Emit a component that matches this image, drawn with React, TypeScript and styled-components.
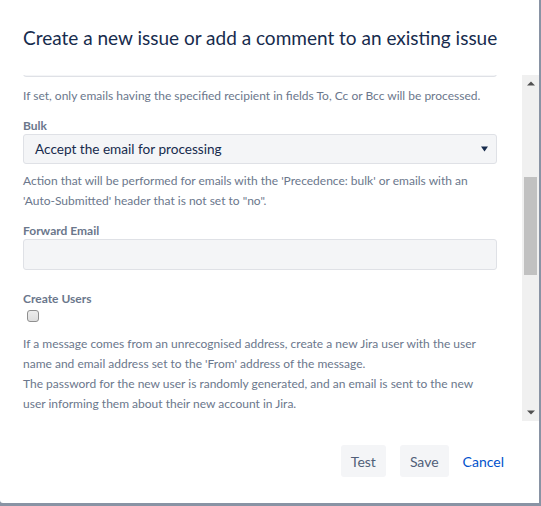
import React, { useLayoutEffect, useRef } from "react";
import styled, { createGlobalStyle } from "styled-components";

const GlobalStyle = createGlobalStyle`
  html, body { margin: 0; padding: 0; }
  body {
    background: #8993a4;
    font-family: Lato, "Noto Sans", "Liberation Sans", sans-serif;
  }
`;

const Dialog = styled.div`
  width: 539px;
  height: 503px;
  background: #ffffff;
  border-bottom-left-radius: 3px;
  display: flex;
  flex-direction: column;
  overflow: hidden;
`;

const Header = styled.div`
  height: 75px;
  padding: 0 23px;
  display: flex;
  align-items: center;
  box-sizing: border-box;
`;

const Title = styled.h2`
  margin: 0;
  font-size: 19px;
  font-weight: 400;
  color: #172b4d;
  white-space: nowrap;
`;

const Body = styled.div`
  height: 346px;
  display: flex;
  flex-direction: row;
`;

const Viewport = styled.div`
  flex: 1;
  overflow: hidden;
`;

const Content = styled.div`
  padding: 0 25px 40px 23px;
`;

const FieldGroup = styled.div<{ $gap?: number }>`
  margin-top: ${(p) => p.$gap ?? 0}px;
`;

const Label = styled.label`
  display: block;
  font-size: 12px;
  line-height: 16px;
  font-weight: 700;
  color: #6b778c;
`;

const TextInput = styled.div`
  height: 31px;
  box-sizing: border-box;
  background: #f4f5f7;
  border: 1px solid #dfe1e6;
  border-radius: 3px;
`;

const Select = styled.div`
  height: 30px;
  box-sizing: border-box;
  background: #f4f5f7;
  border: 1px solid #dfe1e6;
  border-radius: 3px;
  display: flex;
  align-items: center;
  justify-content: space-between;
  padding: 0 8px 0 11px;
  font-size: 13.6px;
  color: #172b4d;
`;

const Help = styled.div<{ $gap?: number }>`
  margin-top: ${(p) => p.$gap ?? 7}px;
  font-size: 12px;
  line-height: 20px;
  color: #6b778c;
  white-space: nowrap;
`;

const Checkbox = styled.input.attrs({ type: "checkbox" })`
  appearance: none;
  display: block;
  margin: 3px 0 0 4px;
  width: 12px;
  height: 12px;
  box-sizing: border-box;
  border: 1px solid #8f8f8f;
  border-radius: 3px;
  background: linear-gradient(#ededed, #dedede);
`;

const Scrollbar = styled.div`
  width: 17px;
  background: #f0f0f0;
  display: flex;
  flex-direction: column;
`;

const ScrollButton = styled.div`
  height: 17px;
  display: flex;
  align-items: center;
  justify-content: center;
`;

const Track = styled.div`
  flex: 1;
`;

const Thumb = styled.div<{ $top: number; $height: number }>`
  margin: ${(p) => p.$top}px 2px 0 2px;
  height: ${(p) => p.$height}px;
  background: #c1c1c1;
`;

const Footer = styled.div`
  flex: 1;
  display: flex;
  justify-content: flex-end;
  align-items: flex-start;
  padding: 24px 25px 0 0;
`;

const Button = styled.button<{ $link?: boolean; $gap?: number }>`
  height: 32px;
  padding: 0 10px;
  margin-left: ${(p) => p.$gap ?? 0}px;
  border: none;
  border-radius: 3px;
  background: ${(p) => (p.$link ? "transparent" : "#f4f5f7")};
  color: ${(p) => (p.$link ? "#0052cc" : "#505f79")};
  font-family: inherit;
  font-size: 14px;
  cursor: pointer;
`;

const Arrow = ({ dir }: { dir: "up" | "down" }) => (
  <svg width="8" height="5" viewBox="0 0 8 5">
    {dir === "up" ? (
      <polygon points="0,4.5 8,4.5 4,0.5" fill="#505050" />
    ) : (
      <polygon points="0,0.5 8,0.5 4,4.5" fill="#505050" />
    )}
  </svg>
);

export default function App() {
  const ref = useRef<HTMLDivElement>(null);
  useLayoutEffect(() => {
    if (ref.current) ref.current.scrollTop = 29;
  }, []);
  return (
    <>
      <GlobalStyle />
      <Dialog>
        <Header>
          <Title>Create a new issue or add a comment to an existing issue</Title>
        </Header>
        <Body>
          <Viewport ref={ref}>
            <Content>
              <FieldGroup>
                <TextInput />
                <Help $gap={9}>
                  If set, only emails having the specified recipient in fields To, Cc or Bcc will be processed.
                </Help>
              </FieldGroup>
              <FieldGroup $gap={12}>
                <Label>Bulk</Label>
                <Select>
                  <span>Accept the email for processing</span>
                  <svg width="7" height="6" viewBox="0 0 7 6">
                    <polygon points="0,0.5 7,0.5 3.5,5.5" fill="#172b4d" />
                  </svg>
                </Select>
                <Help>
                  Action that will be performed for emails with the 'Precedence: bulk' or emails with an
                  <br />
                  'Auto-Submitted' header that is not set to "no".
                </Help>
              </FieldGroup>
              <FieldGroup $gap={12}>
                <Label>Forward Email</Label>
                <TextInput />
              </FieldGroup>
              <FieldGroup $gap={21}>
                <Label>Create Users</Label>
                <Checkbox />
                <Help $gap={12}>
                  If a message comes from an unrecognised address, create a new Jira user with the user
                  <br />
                  name and email address set to the 'From' address of the message.
                  <br />
                  The password for the new user is randomly generated, and an email is sent to the new
                  <br />
                  user informing them about their new account in Jira.
                </Help>
              </FieldGroup>
            </Content>
          </Viewport>
          <Scrollbar>
            <ScrollButton>
              <Arrow dir="up" />
            </ScrollButton>
            <Track>
              <Thumb $top={85} $height={98} />
            </Track>
            <ScrollButton>
              <Arrow dir="down" />
            </ScrollButton>
          </Scrollbar>
        </Body>
        <Footer>
          <Button>Test</Button>
          <Button $gap={14}>Save</Button>
          <Button $link $gap={4}>Cancel</Button>
        </Footer>
      </Dialog>
    </>
  );
}
